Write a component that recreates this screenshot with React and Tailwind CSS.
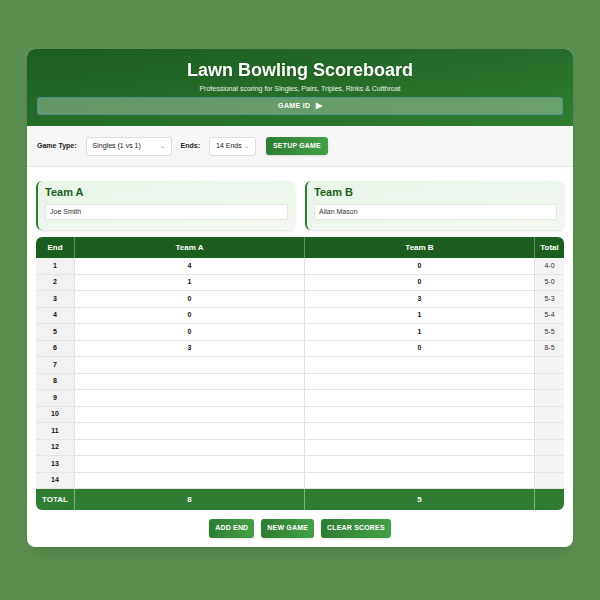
import React from 'react';

const teamA = [4, 1, 0, 0, 0, 3];
const teamB = [0, 0, 3, 1, 1, 0];

const rows = Array.from({ length: 14 }, (_, i) => {
  const a = teamA[i];
  const b = teamB[i];
  let total = '';
  if (a !== undefined) {
    const sa = teamA.slice(0, i + 1).reduce((s, v) => s + v, 0);
    const sb = teamB.slice(0, i + 1).reduce((s, v) => s + v, 0);
    total = `${sa}-${sb}`;
  }
  return { end: i + 1, a: a ?? '', b: b ?? '', total };
});

const btn =
  'bg-gradient-to-r from-[#2e7d32] to-[#43a047] text-white text-[7px] font-bold tracking-wide uppercase rounded-[3px] shadow-sm';

const TeamCard = ({ label, name }) => (
  <div className="flex-1 rounded-md border-l-2 border-[#2e7d32] bg-gradient-to-br from-[#e8f5e9] to-[#f3f8f1] px-[7px] pt-[6px] pb-[10px] shadow-sm">
    <div className="text-[11px] font-bold text-[#1b5e20] leading-none mb-[6px]">{label}</div>
    <div className="h-[16px] bg-white border border-[#e5e5e5] rounded-[2px] flex items-center px-[4px] text-[7px] text-[#333]">
      {name}
    </div>
  </div>
);

export default function App() {
  return (
    <div
      className="min-h-[600px] bg-[#5b8f4f] pt-[49px]"
      style={{ fontFamily: '"Liberation Sans", Arial, sans-serif' }}
    >
      <div className="w-[546px] mx-auto bg-white rounded-lg overflow-hidden shadow-lg">
        {/* header */}
        <div className="bg-gradient-to-br from-[#1b5e20] to-[#2e7d32] px-[10px] pt-[12px] pb-[11px] text-center">
          <h1 className="text-[18px] font-bold text-white leading-none drop-shadow">Lawn Bowling Scoreboard</h1>
          <p className="text-[7px] text-white/90 mt-[6px] leading-none">
            Professional scoring for Singles, Pairs, Triples, Rinks &amp; Cutthroat
          </p>
          <div className="mt-[5px] h-[18px] rounded-[3px] bg-white/30 border border-[#3f8fb5]/60 flex items-center justify-center gap-[5px] text-white text-[7px] font-bold tracking-wider">
            GAME ID <span className="text-[8px]">▶</span>
          </div>
        </div>

        {/* controls */}
        <div className="bg-[#f7f7f7] border-b border-[#e6e6e6] h-[41px] px-[10px] flex items-center gap-[9px] text-[7px] text-[#222]">
          <span className="font-bold">Game Type:</span>
          <div className="w-[86px] h-[19px] bg-white border border-[#dcdcdc] rounded-[3px] flex items-center justify-between px-[6px]">
            <span>Singles (1 vs 1)</span>
            <span className="text-[#888] text-[6px]">⌄</span>
          </div>
          <span className="font-bold">Ends:</span>
          <div className="w-[47px] h-[19px] bg-white border border-[#dcdcdc] rounded-[3px] flex items-center justify-between px-[6px]">
            <span>14 Ends</span>
            <span className="text-[#888] text-[6px]">⌄</span>
          </div>
          <button className={`${btn} h-[18px] px-[7px] ml-[1px]`}>SETUP GAME</button>
        </div>

        <div className="px-[9px] pt-[14px] pb-[9px]">
          {/* teams */}
          <div className="flex gap-[10px]">
            <TeamCard label="Team A" name="Joe Smith" />
            <TeamCard label="Team B" name="Allan Mason" />
          </div>

          {/* table */}
          <div className="mt-[7px] rounded-md overflow-hidden text-[7px] font-bold">
            <div className="grid grid-cols-[39px_1fr_1fr_29px] h-[21px] bg-[#1b5e20] text-white text-[8px]">
              <div className="flex items-center justify-center border-r border-white/30">End</div>
              <div className="flex items-center justify-center border-r border-white/30">Team A</div>
              <div className="flex items-center justify-center border-r border-white/30">Team B</div>
              <div className="flex items-center justify-center">Total</div>
            </div>
            {rows.map((r) => (
              <div
                key={r.end}
                className="grid grid-cols-[39px_1fr_1fr_29px] h-[16.5px] border-b border-[#e4e4e4] text-[#111]"
              >
                <div className="flex items-center justify-center bg-[#f2f2f2] border-r border-[#e0e0e0]">{r.end}</div>
                <div className="flex items-center justify-center bg-white border-r border-[#e0e0e0]">{r.a}</div>
                <div className="flex items-center justify-center bg-white border-r border-[#e0e0e0]">{r.b}</div>
                <div className="flex items-center justify-center bg-[#f4f4f4] font-normal text-[#333]">{r.total}</div>
              </div>
            ))}
            <div className="grid grid-cols-[39px_1fr_1fr_29px] h-[21px] bg-[#2e7d32] text-white text-[8px]">
              <div className="flex items-center justify-center border-r border-white/40">TOTAL</div>
              <div className="flex items-center justify-center border-r border-white/40">8</div>
              <div className="flex items-center justify-center border-r border-white/40">5</div>
              <div></div>
            </div>
          </div>

          {/* actions */}
          <div className="flex justify-center gap-[7px] mt-[9px]">
            <button className={`${btn} h-[19px] px-[6px]`}>ADD END</button>
            <button className={`${btn} h-[19px] px-[6px]`}>NEW GAME</button>
            <button className={`${btn} h-[19px] px-[6px]`}>CLEAR SCORES</button>
          </div>
        </div>
      </div>
    </div>
  );
}
